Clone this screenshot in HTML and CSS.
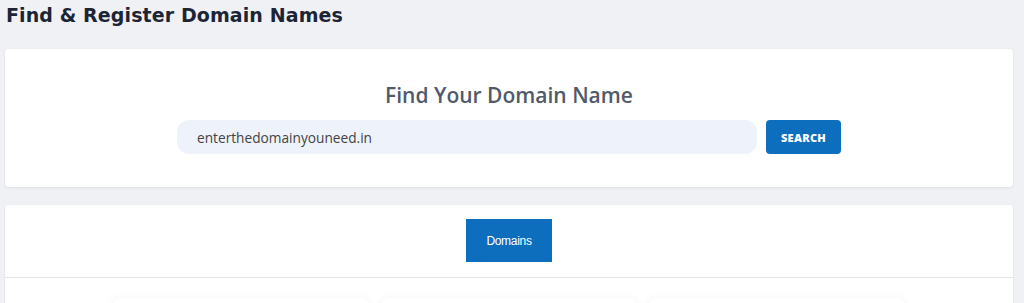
FILE: index.html
```html
<!DOCTYPE html>
<html lang="en">
<head>
  <meta charset="UTF-8" />
  <title>Find &amp; Register Domain Names</title>
  <link rel="stylesheet" href="styles.css">
</head>
<body>
  <h1 class="page-title">Find &amp; Register Domain Names</h1>

  <div class="card search-card">
    <h2 class="search-title">Find Your Domain Name</h2>
    <form class="search-row">
      <input class="search-input" type="text" value="enterthedomainyouneed.in" />
      <button type="button" class="search-btn">SEARCH</button>
    </form>
  </div>

  <div class="card tabs-card">
    <div class="tabs">
      <button class="tab active">Domains</button>
    </div>
    <div class="tab-body">
      <div class="plan"></div>
      <div class="plan"></div>
      <div class="plan"></div>
    </div>
  </div>
</body>
</html>
```

FILE: styles.css
```css
* { box-sizing: border-box; }
body {
  margin: 0;
  padding: 0 11px 0 5px;
  background: #f0f1f5;
  font-family: "Open Sans", sans-serif;
  overflow: hidden;
}
.page-title {
  margin: 0;
  padding: 4px 0 0 1px;
  height: 49px;
  font-family: "DejaVu Sans", sans-serif;
  font-weight: 700;
  font-size: 19px;
  letter-spacing: 0.1px;
  color: #1c2536;
}
.card {
  background: #fff;
  border-radius: 4px;
  box-shadow: 0 1px 3px rgba(0, 0, 0, 0.08);
}
.search-card {
  height: 138px;
  padding-top: 29px;
  margin-bottom: 18px;
}
.search-title {
  margin: 0 0 8px;
  text-align: center;
  font-size: 21px;
  font-weight: 600;
  color: #505a6b;
  line-height: 34px;
}
.search-row {
  display: flex;
  justify-content: center;
  gap: 9px;
  margin: 0;
}
.search-input {
  width: 580px;
  height: 34px;
  border: none;
  border-radius: 12px;
  background: #eef2fa;
  padding: 0 20px;
  font-family: "Open Sans", sans-serif;
  font-size: 13.7px;
  color: #444;
  outline: none;
}
.search-btn {
  width: 75px;
  height: 34px;
  border: none;
  border-radius: 4px;
  background: #0d6ebd;
  color: #fff;
  font-family: "Open Sans", sans-serif;
  font-weight: 800;
  font-size: 11px;
  letter-spacing: 0.3px;
  cursor: pointer;
}
.tabs {
  display: flex;
  justify-content: center;
  padding: 14px 0 15px;
  border-bottom: 1px solid #e3e5ea;
}
.tab {
  width: 86px;
  height: 43px;
  border: none;
  background: #0d6ebd;
  color: #fff;
  font-family: "Liberation Sans", sans-serif;
  font-size: 12px;
  letter-spacing: -0.3px;
  cursor: pointer;
}
.tab-body {
  display: flex;
  justify-content: center;
  gap: 10px;
  padding: 20px 0 20px;
}
.plan {
  width: 258px;
  height: 120px;
  border-radius: 10px;
  background: #fff;
  box-shadow: 0 0 10px rgba(0, 0, 0, 0.05);
}
```
